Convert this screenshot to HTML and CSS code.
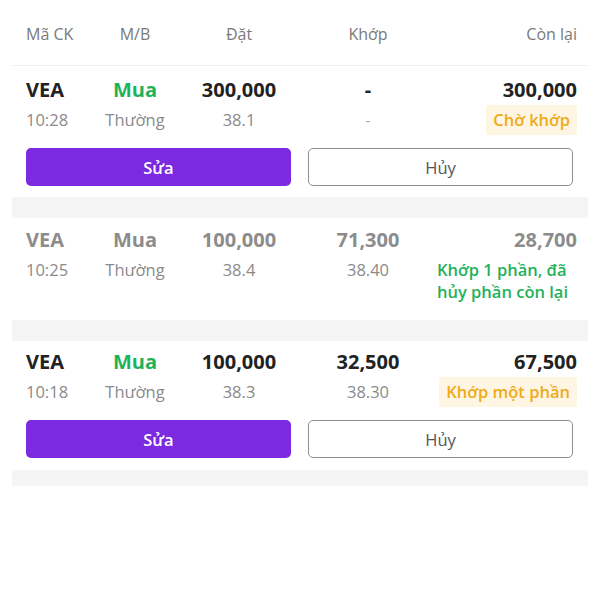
FILE: index.html
```html
<!DOCTYPE html>
<html lang="vi">
<head>
<meta charset="utf-8">
<link rel="stylesheet" href="styles.css">
</head>
<body>
<div class="wrap">
  <div class="grid head">
    <div class="c1">Mã CK</div>
    <div class="c2">M/B</div>
    <div class="c3">Đặt</div>
    <div class="c4">Khớp</div>
    <div class="c5">Còn lại</div>
  </div>
  <div class="list">
    <div class="card first">
      <div class="grid r1">
        <div class="c1">VEA</div>
        <div class="c2 buy">Mua</div>
        <div class="c3">300,000</div>
        <div class="c4">-</div>
        <div class="c5">300,000</div>
      </div>
      <div class="grid r2">
        <div class="c1">10:28</div>
        <div class="c2">Thường</div>
        <div class="c3">38.1</div>
        <div class="c4 dash">-</div>
        <div class="c5"><span class="badge wait">Chờ khớp</span></div>
      </div>
      <div class="actions">
        <button class="btn edit">Sửa</button>
        <button class="btn cancel">Hủy</button>
      </div>
    </div>
    <div class="card done">
      <div class="grid r1">
        <div class="c1">VEA</div>
        <div class="c2">Mua</div>
        <div class="c3">100,000</div>
        <div class="c4">71,300</div>
        <div class="c5">28,700</div>
      </div>
      <div class="grid r2">
        <div class="c1">10:25</div>
        <div class="c2">Thường</div>
        <div class="c3">38.4</div>
        <div class="c4">38.40</div>
        <div class="c5"><span class="badge partial-cancel">Khớp 1 phần, đã<br>hủy phần còn lại</span></div>
      </div>
    </div>
    <div class="card">
      <div class="grid r1">
        <div class="c1">VEA</div>
        <div class="c2 buy">Mua</div>
        <div class="c3">100,000</div>
        <div class="c4">32,500</div>
        <div class="c5">67,500</div>
      </div>
      <div class="grid r2">
        <div class="c1">10:18</div>
        <div class="c2">Thường</div>
        <div class="c3">38.3</div>
        <div class="c4">38.30</div>
        <div class="c5"><span class="badge wait">Khớp một phần</span></div>
      </div>
      <div class="actions">
        <button class="btn edit">Sửa</button>
        <button class="btn cancel">Hủy</button>
      </div>
    </div>
  </div>
</div>
</body>
</html>
```
FILE: styles.css
```css
* { box-sizing: border-box; }
html, body { margin: 0; padding: 0; background: #fff; }
body {
  font-family: "Open Sans", "Noto Sans", sans-serif;
  color: #222;
}
.wrap {
  width: 576px;
  margin: 0 12px;
}
.grid {
  display: grid;
  grid-template-columns: 70px 78px 130px 128px 145px;
  padding: 0 11px 0 14px;
  align-items: center;
}
.c1 { text-align: left; }
.c2, .c3, .c4 { text-align: center; }
.c5 { text-align: right; }

.head {
  height: 66px;
  font-size: 16px;
  color: #7a7a7a;
  padding-top: 2px;
  border-bottom: 1px solid #eeeeee;
}
.list {
  background: #f5f5f5;
  display: flex;
  flex-direction: column;
  gap: 21px;
  padding-bottom: 16px;
}
.card {
  background: #fff;
  padding: 4px 0 12px;
}
.card.first { padding-top: 7px; padding-bottom: 11px; }
.card.done { padding-top: 5px; padding-bottom: 13px; }
.r1 {
  height: 32px;
  font-size: 20px;
  font-weight: 700;
  color: #222;
}
.r1 .buy { color: #1fb25a; }
.card.done .r1 { color: #8c8c8c; }
.r2 {
  font-size: 16.5px;
  color: #8a8a8a;
  align-items: start;
}
.r2 > div { line-height: 30px; height: auto; }
.r2 .c5 { display: flex; justify-content: flex-end; }
.dash { color: #b0b0b0; }
.badge {
  display: block;
  font-size: 16.5px;
  font-weight: 600;
  line-height: 22px;
  padding: 4px 7px;
  border-radius: 3px;
}
.badge.wait {
  background: #fff5e3;
  color: #efab17;
}
.badge.partial-cancel {
  color: #1fb25a;
  text-align: left;
  padding: 4px 9px 4px 0;
}
.actions {
  display: grid;
  grid-template-columns: 1fr 1fr;
  gap: 17px;
  padding: 0 15px 0 14px;
  margin-top: 13px;
}
.btn {
  height: 38px;
  margin: 0;
  font-family: inherit;
  font-size: 16.5px;
  font-weight: 600;
  border-radius: 5px;
}
.btn.edit {
  background: #7b2ae1;
  color: #fff;
  border: none;
}
.btn.cancel {
  background: #fff;
  color: #555;
  border: 1.5px solid #8f8f8f;
  font-weight: 400;
}
```
